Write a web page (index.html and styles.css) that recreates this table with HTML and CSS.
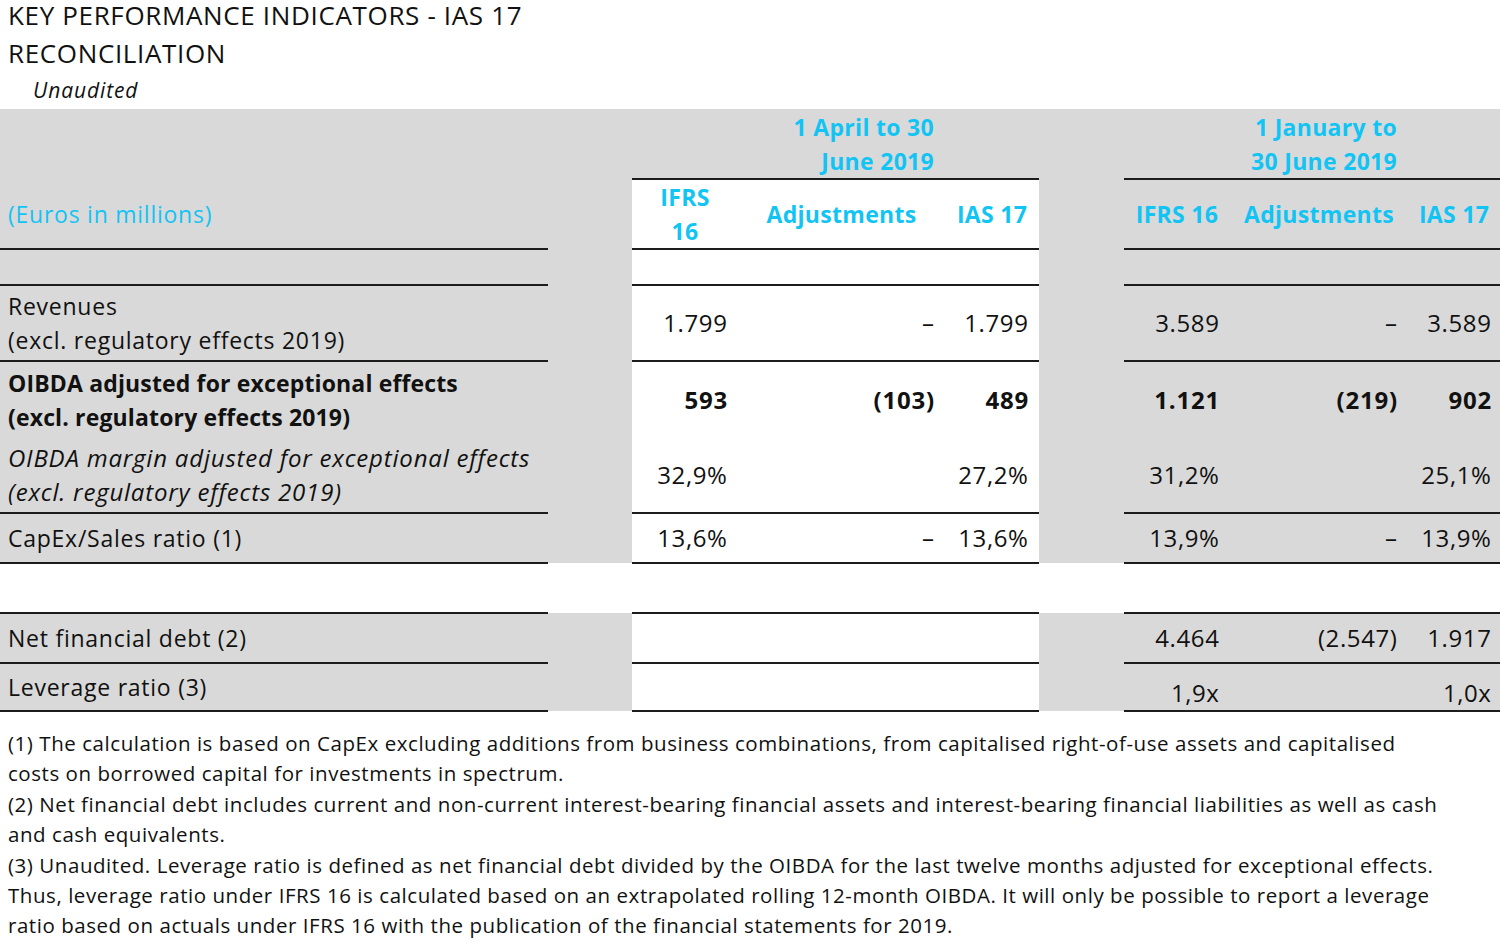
FILE: index.html
```html
<!DOCTYPE html>
<html lang="en">
<head>
<meta charset="utf-8">
<title>Key Performance Indicators - IAS 17 Reconciliation</title>
<link rel="stylesheet" href="styles.css">
</head>
<body>
<header class="head">
  <h1 class="title">KEY PERFORMANCE INDICATORS - IAS 17<br>RECONCILIATION</h1>
  <p class="sub">Unaudited</p>
</header>
<table class="kpi">
  <colgroup>
    <col class="c-lab"><col class="c-gap"><col class="c-ifrs"><col class="c-adj"><col class="c-ias">
    <col class="c-gap2"><col class="c-ifrs"><col class="c-adj2"><col class="c-ias2">
  </colgroup>
  <tr class="r-h1">
    <td></td><td class="gap"></td>
    <td class="b"></td><td class="b hd right">1 April to 30<br>June 2019</td><td class="b"></td>
    <td class="gap"></td>
    <td class="b"></td><td class="b hd right">1 January to<br>30 June 2019</td><td class="b"></td>
  </tr>
  <tr class="r-h2">
    <td class="b lab hdl">(Euros in millions)</td><td class="gap"></td>
    <td class="b w hd center">IFRS<br>16</td><td class="b w hd center">Adjustments</td><td class="b w hd center">IAS 17</td>
    <td class="gap"></td>
    <td class="b hd center">IFRS 16</td><td class="b hd center">Adjustments</td><td class="b hd center">IAS 17</td>
  </tr>
  <tr class="r-empty">
    <td class="b"></td><td class="gap"></td>
    <td class="b w"></td><td class="b w"></td><td class="b w"></td>
    <td class="gap"></td>
    <td class="b"></td><td class="b"></td><td class="b"></td>
  </tr>
  <tr class="r-two">
    <td class="b lab">Revenues<br>(excl. regulatory effects 2019)</td><td class="gap"></td>
    <td class="b w num">1.799</td><td class="b w num">–</td><td class="b w num">1.799</td>
    <td class="gap"></td>
    <td class="b num">3.589</td><td class="b num">–</td><td class="b num end">3.589</td>
  </tr>
  <tr class="r-two bold">
    <td class="lab">OIBDA adjusted for exceptional effects<br>(excl. regulatory effects 2019)</td><td class="gap"></td>
    <td class="w num">593</td><td class="w num">(103)</td><td class="w num">489</td>
    <td class="gap"></td>
    <td class="num">1.121</td><td class="num">(219)</td><td class="num end">902</td>
  </tr>
  <tr class="r-two">
    <td class="b lab it">OIBDA margin adjusted for exceptional effects<br>(excl. regulatory effects 2019)</td><td class="gap"></td>
    <td class="b w num">32,9%</td><td class="b w num"></td><td class="b w num">27,2%</td>
    <td class="gap"></td>
    <td class="b num">31,2%</td><td class="b num"></td><td class="b num end">25,1%</td>
  </tr>
  <tr class="r-one">
    <td class="b lab">CapEx/Sales ratio (1)</td><td class="gap"></td>
    <td class="b w num">13,6%</td><td class="b w num">–</td><td class="b w num">13,6%</td>
    <td class="gap"></td>
    <td class="b num">13,9%</td><td class="b num">–</td><td class="b num end">13,9%</td>
  </tr>
  <tr class="r-one spacer">
    <td class="b"></td><td class="gap"></td>
    <td class="b"></td><td class="b"></td><td class="b"></td>
    <td class="gap"></td>
    <td class="b"></td><td class="b"></td><td class="b"></td>
  </tr>
  <tr class="r-one">
    <td class="b lab">Net financial debt (2)</td><td class="gap"></td>
    <td class="b w num"></td><td class="b w num"></td><td class="b w num"></td>
    <td class="gap"></td>
    <td class="b num">4.464</td><td class="b num">(2.547)</td><td class="b num end">1.917</td>
  </tr>
  <tr class="r-last">
    <td class="b lab">Leverage ratio (3)</td><td class="gap"></td>
    <td class="b w num"></td><td class="b w num"></td><td class="b w num"></td>
    <td class="gap"></td>
    <td class="b num low">1,9x</td><td class="b num low"></td><td class="b num low end">1,0x</td>
  </tr>
</table>
<footer class="notes">
  <p>(1) The calculation is based on CapEx excluding additions from business combinations, from capitalised right-of-use assets and capitalised<br>costs on borrowed capital for investments in spectrum.</p>
  <p>(2) Net financial debt includes current and non-current interest-bearing financial assets and interest-bearing financial liabilities as well as cash<br>and cash equivalents.</p>
  <p>(3) Unaudited. Leverage ratio is defined as net financial debt divided by the OIBDA for the last twelve months adjusted for exceptional effects.<br>Thus, leverage ratio under IFRS 16 is calculated based on an extrapolated rolling 12-month OIBDA. It will only be possible to report a leverage<br>ratio based on actuals under IFRS 16 with the publication of the financial statements for 2019.</p>
</footer>
</body>
</html>
```

FILE: styles.css
```css
html, body {
  margin: 0;
  padding: 0;
  background: #ffffff;
}
body {
  width: 1500px;
  height: 948px;
  overflow: hidden;
  font-family: "Open Sans", Lato, sans-serif;
  color: #111111;
}
.head {
  padding-left: 8px;
}
.title {
  margin: 0;
  margin-top: -4px;
  font-weight: 400;
  font-size: 26px;
  letter-spacing: 0.65px;
  line-height: 38px;
}
.sub {
  margin: 0;
  padding-left: 25px;
  font-style: italic;
  font-size: 21px;
  letter-spacing: 0.9px;
  line-height: 36px;
  height: 37px;
}
.kpi {
  border-collapse: collapse;
  table-layout: fixed;
  width: 1500px;
  font-size: 23px;
  letter-spacing: 0.75px;
}
.c-lab { width: 548px; }
.c-gap { width: 84px; }
.c-ifrs { width: 106px; }
.c-adj { width: 207px; }
.c-ias { width: 94px; }
.c-gap2 { width: 85px; }
.c-adj2 { width: 178px; }
.c-ias2 { width: 92px; }
.kpi td {
  background: #d9d9d9;
  padding: 0 11px 0 0;
  vertical-align: middle;
  line-height: 34px;
  white-space: nowrap;
}
.kpi td.b {
  border-bottom: 2px solid #1c1c1c;
}
.kpi td.w {
  background: #ffffff;
}
.kpi td.gap {
  border: none;
}
.spacer td {
  background: #ffffff;
}
.r-h1 { height: 70px; }
.r-h2 { height: 69px; }
.r-empty { height: 36px; }
.r-two { height: 76px; }
.r-one { height: 50px; }
.r-last { height: 48px; }
.kpi td.lab {
  padding-left: 8px;
  text-align: left;
}
.kpi td.num {
  text-align: right;
  font-size: 24px;
  letter-spacing: 0.6px;
  padding-right: 10.5px;
}
.kpi td.num.end {
  padding-right: 8.5px;
}
.kpi td.low {
  vertical-align: bottom;
}
.kpi td.hd {
  color: #12c4f4;
  font-weight: 700;
  letter-spacing: 0.3px;
}
.kpi td.hdl {
  color: #12c4f4;
}
.kpi td.center {
  text-align: center;
  padding: 0;
}
.kpi td.right {
  text-align: right;
}
.bold td {
  font-weight: 700;
  letter-spacing: 0.15px;
}
.bold td.num {
  letter-spacing: 0.8px;
  padding-right: 10px;
}
.bold td.num.end {
  padding-right: 8px;
}
.kpi td.it {
  font-style: italic;
  font-weight: 400;
  font-size: 24px;
  letter-spacing: 0.8px;
}
.notes {
  padding: 16px 0 0 8px;
  font-size: 20.5px;
  letter-spacing: 0.55px;
  line-height: 30.4px;
  white-space: nowrap;
}
.notes p {
  margin: 0;
}
```
